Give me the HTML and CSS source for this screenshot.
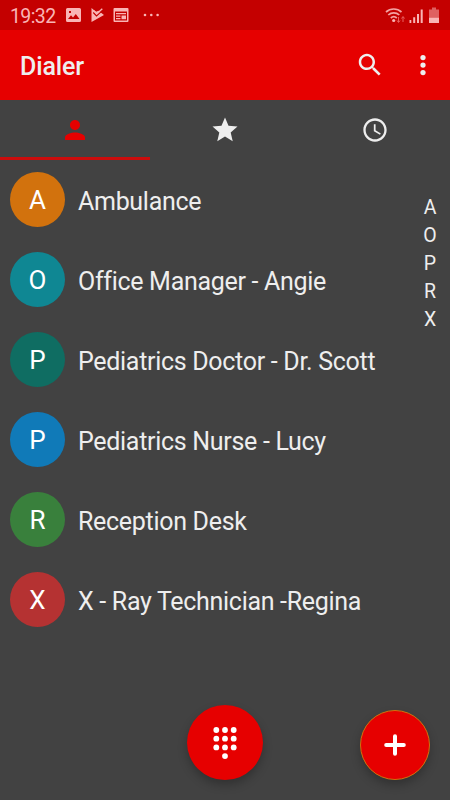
FILE: index.html
```
<!DOCTYPE html>
<html lang="en">
<head>
    <meta charset="UTF-8">
    <meta name="viewport" content="width=device-width, initial-scale=1.0">
    <title>Dialer</title>
    <link rel="stylesheet" href="styles.css">
</head>
<body>
    <div class="phone">
        <div class="status-bar">
            <span class="time">19:32</span>
            <svg class="status-left" width="96" height="16" viewBox="0 0 96 16">
                <path fill-rule="evenodd" d="M1.500 1h12a1.500 1.500 0 0 1 1.500 1.500v11a1.500 1.500 0 0 1-1.500 1.500h-12a1.500 1.500 0 0 1-1.500-1.500v-11a1.500 1.500 0 0 1 1.500-1.500zM2 12h11.500l-3.700-5-2.800 3.600-2-2.300zM3 4v2h2v-2z"/>
                <path d="M25.500 1l4.500 3.800 2.500-1 5.500 4.200-12.500 7z"/>
                <path d="M27.300 5.500l3.200 3.400 7-6.400" fill="none" stroke="#c40000" stroke-width="1.200"/>
                <path d="M28 3.800l2.800 3 5.500-5" fill="none" stroke="currentColor" stroke-width="1.400"/>
                <path fill-rule="evenodd" d="M48.500 1h13a1 1 0 0 1 1 1v12a1 1 0 0 1-1 1h-13a1 1 0 0 1-1-1v-12a1 1 0 0 1 1-1zM49 4.500v9h12v-9zM50 6h10v1.300h-10zM50 8.500h4.500v1.200h-4.500zM50 11h4.500v1.200h-4.500zM55.500 8.500h4.500v3.700h-4.500z"/>
                <circle cx="79" cy="8" r="1.300"/>
                <circle cx="85.300" cy="8" r="1.300"/>
                <circle cx="91.600" cy="8" r="1.300"/>
            </svg>
            <svg class="status-right" width="56" height="18" viewBox="0 0 56 18">
                <g fill="none" stroke="#f3a3a3" stroke-width="1.700">
                    <path d="M1 6a11.500 11.500 0 0 1 15.500 0"/>
                    <path d="M3.300 9a8 8 0 0 1 11 0"/>
                    <path d="M5.800 12a4.500 4.500 0 0 1 6 0"/>
                </g>
                <circle cx="8.700" cy="14.500" r="1.600"/>
                <path d="M13.500 11v5M12 14.500l1.500 2 1.500-2M18 16v-5M16.500 12.500l1.500-2 1.500 2" fill="none" stroke="#e86060"/>
                <path d="M24.500 14h1.800v3h-1.800zM28.200 11.300h2v5.700h-2zM32 8h2v9h-2zM35.700 3.500h2v13.500h-2z"/>
                <path fill="#df6060" d="M44 3.500h3v-2h4v2h3v8h-10z"/>
                <path d="M44 11.500h10v5.500h-10z"/>
            </svg>
        </div>

        <header class="header">
            <h1>Dialer</h1>
            <div class="header-actions">
                <svg class="icon" viewBox="0 0 24 24"><path d="M15.500 14h-.79l-.28-.27C15.410 12.590 16 11.110 16 9.500 16 5.910 13.090 3 9.500 3S3 5.910 3 9.500 5.910 16 9.500 16c1.610 0 3.090-.59 4.230-1.570l.27.28v.79l5 4.990L20.490 19l-4.990-5zm-6 0C7.010 14 5 11.990 5 9.500S7.010 5 9.500 5 14 7.010 14 9.500 11.990 14 9.500 14z"/></svg>
                <svg class="icon" viewBox="0 0 24 24"><circle cx="12" cy="6" r="2.100"/><circle cx="12" cy="12" r="2.100"/><circle cx="12" cy="18" r="2.100"/></svg>
            </div>
        </header>

        <nav class="tabs">
            <div class="tab active">
                <svg class="icon" viewBox="0 0 24 24"><path d="M12 12c2.210 0 4-1.790 4-4s-1.790-4-4-4-4 1.790-4 4 1.790 4 4 4zm0 2c-2.670 0-8 1.340-8 4v2h16v-2c0-2.660-5.330-4-8-4z"/></svg>
            </div>
            <div class="tab">
                <svg class="icon" viewBox="0 0 24 24"><path d="M12 17.270L18.180 21l-1.640-7.030L22 9.240l-7.190-.61L12 2 9.190 8.630 2 9.240l5.460 4.730L5.820 21z"/></svg>
            </div>
            <div class="tab">
                <svg class="icon clock" viewBox="0 0 24 24"><path d="M11.990 2C6.470 2 2 6.480 2 12s4.470 10 9.990 10C17.520 22 22 17.520 22 12S17.520 2 11.990 2zM12 20c-4.420 0-8-3.580-8-8s3.580-8 8-8 8 3.580 8 8-3.580 8-8 8zm.5-13H11v6l5.250 3.150.75-1.230-4.500-2.670z"/></svg>
            </div>
        </nav>

        <main class="content">
            <ul class="contacts">
                <li><span class="avatar orange">A</span><span class="name">Ambulance</span></li>
                <li><span class="avatar cyan">O</span><span class="name">Office Manager - Angie</span></li>
                <li><span class="avatar teal">P</span><span class="name">Pediatrics Doctor - Dr. Scott</span></li>
                <li><span class="avatar blue">P</span><span class="name">Pediatrics Nurse - Lucy</span></li>
                <li><span class="avatar green">R</span><span class="name">Reception Desk</span></li>
                <li><span class="avatar red">X</span><span class="name">X - Ray Technician -Regina</span></li>
            </ul>
            <div class="letters">
                <span>A</span>
                <span>O</span>
                <span>P</span>
                <span>R</span>
                <span>X</span>
            </div>
        </main>

        <!-- Floating buttons -->
        <button class="fab dialpad">
            <svg width="26" height="34" viewBox="0 0 26 34">
                <circle cx="4.300" cy="4" r="2.900"/><circle cx="13" cy="4" r="2.900"/><circle cx="21.700" cy="4" r="2.900"/>
                <circle cx="4.300" cy="12.700" r="2.900"/><circle cx="13" cy="12.700" r="2.900"/><circle cx="21.700" cy="12.700" r="2.900"/>
                <circle cx="4.300" cy="21.400" r="2.900"/><circle cx="13" cy="21.400" r="2.900"/><circle cx="21.700" cy="21.400" r="2.900"/>
                <circle cx="13" cy="30.100" r="2.900"/>
            </svg>
        </button>
        <button class="fab add">
            <svg width="22" height="22" viewBox="0 0 22 22"><path d="M11 2.200v17.600M2.200 11h17.600" stroke="#fff" stroke-width="4" stroke-linecap="round"/></svg>
        </button>
    </div>
</body>
</html>
```
FILE: styles.css
```
* {
    box-sizing: border-box;
}
body {
    margin: 0;
    font-family: Roboto, "Liberation Sans", sans-serif;
    background-color: #424242;
    color: #eee;
}
svg {
    display: block;
    fill: currentColor;
}
.phone {
    position: relative;
    width: 450px;
    height: 800px;
    overflow: hidden;
    display: flex;
    flex-direction: column;
}
.status-bar {
    display: flex;
    align-items: center;
    height: 30px;
    padding: 0 9px 0 10px;
    background-color: #c40000;
    color: #f9b5b5;
}
.time {
    width: 56px;
    padding-top: 3px;
    font-size: 19.5px;
    letter-spacing: -0.6px;
    line-height: 28px;
}
.status-right {
    margin-left: auto;
}
.header {
    display: flex;
    align-items: center;
    justify-content: space-between;
    height: 70px;
    padding: 0 12.5px 0 20px;
    background-color: #e60000;
}
h1 {
    margin: 3px 0 0;
    font-size: 25px;
    font-weight: 500;
    letter-spacing: -0.15px;
    line-height: 30px;
}
.header-actions {
    display: flex;
    gap: 23px;
}
.icon {
    width: 30px;
    height: 30px;
}
.tabs {
    display: flex;
    height: 60px;
}
.tab {
    flex: 1;
    display: flex;
    align-items: center;
    justify-content: center;
    border-bottom: 3px solid transparent;
    padding-top: 3px;
}
.tab.active {
    color: #e60000;
    border-bottom-color: #cc0c0c;
}
.clock {
    width: 28px;
    height: 28px;
}
.content {
    display: flex;
    justify-content: space-between;
}
.contacts {
    margin: 0;
    padding: 0;
    list-style: none;
}
.contacts li {
    display: flex;
    align-items: center;
    gap: 13px;
    height: 80px;
    padding: 0 0 1px 10px;
}
.avatar {
    width: 55px;
    height: 55px;
    border-radius: 50%;
    color: #fff;
    font-size: 26px;
    line-height: 56px;
    text-align: center;
}
.name {
    font-size: 25px;
    letter-spacing: -0.3px;
    line-height: 30px;
    padding-top: 5px;
}
.orange {
    background-color: #d2720d;
}
.cyan {
    background-color: #0f8793;
}
.teal {
    background-color: #0f6d62;
}
.blue {
    background-color: #107ab8;
}
.green {
    background-color: #39803c;
}
.red {
    background-color: #b53232;
}
.letters {
    display: flex;
    flex-direction: column;
    width: 40px;
    padding-top: 34px;
    text-align: center;
    font-size: 19.5px;
    line-height: 28px;
}
.fab {
    position: absolute;
    display: flex;
    align-items: center;
    justify-content: center;
    padding: 0;
    border: none;
    border-radius: 50%;
    background-color: #e60000;
    color: #fff;
    box-shadow: 0 5px 10px rgba(0, 0, 0, 0.25);
}
.dialpad {
    left: 187px;
    top: 705px;
    width: 76px;
    height: 75px;
}
.add {
    left: 360px;
    top: 710px;
    width: 70px;
    height: 70px;
    border: 1px solid #d2720d;
}
```
